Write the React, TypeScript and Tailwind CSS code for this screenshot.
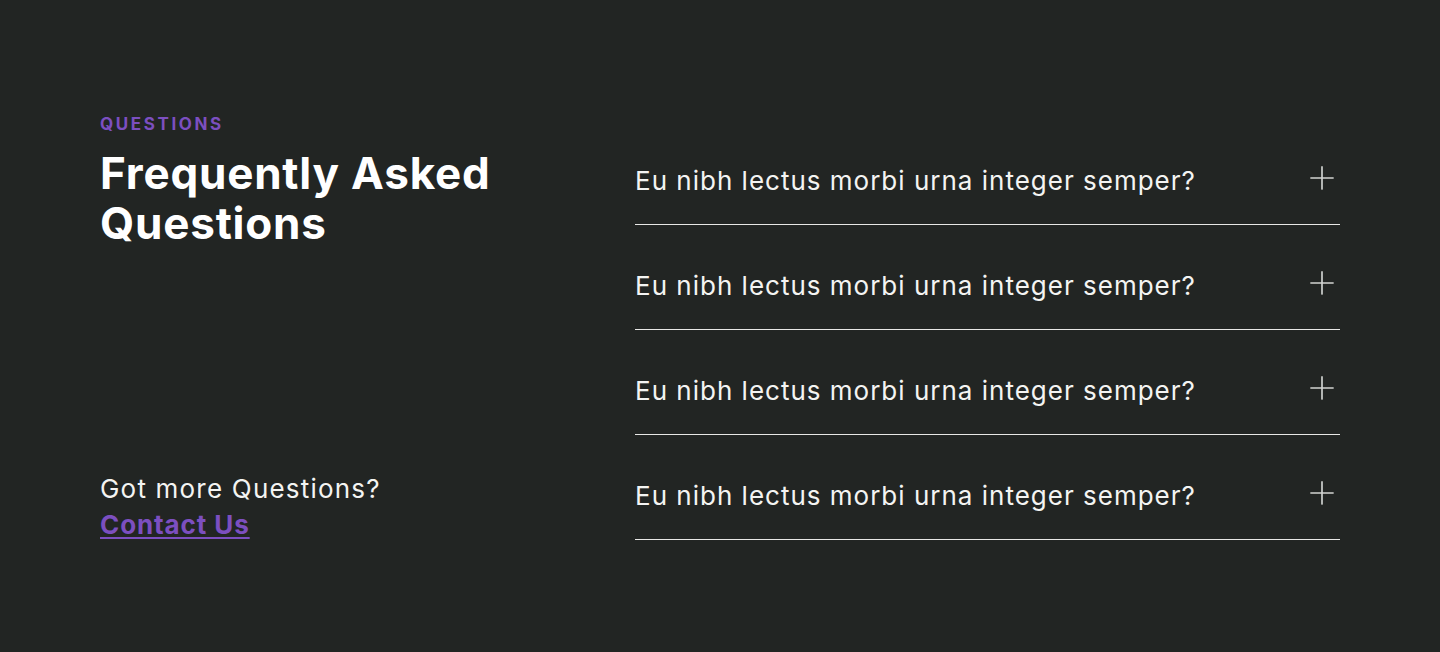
import { Plus } from "lucide-react";

const questions = [
  "Eu nibh lectus morbi urna integer semper?",
  "Eu nibh lectus morbi urna integer semper?",
  "Eu nibh lectus morbi urna integer semper?",
  "Eu nibh lectus morbi urna integer semper?",
];

function FaqRow({ q }: { q: string }) {
  return (
    <div className="flex items-center justify-between border-b border-[#e8e8e6] pt-[43px] pb-[25px]">
      <span className="text-[26px] leading-[36px] font-normal tracking-[1px] text-[#f4f4f2]">{q}</span>
      <Plus className="-my-[1px] -mr-[1px] -translate-y-[3px] h-[38px] w-[38px] text-[#d2d4d1]" strokeWidth={1.05} />
    </div>
  );
}

export default function App() {
  return (
    <div
      className="min-h-[652px] w-full bg-[#222523] pt-[105px]"
      style={{ fontFamily: "Inter, 'Noto Sans', sans-serif" }}
    >
      <div className="mx-[100px] flex justify-between">
        <div className="flex w-[420px] flex-col justify-between">
          <div>
            <p className="text-[17px] leading-[38px] font-bold tracking-[2.6px] text-[#7c4fc0]">QUESTIONS</p>
            <h2 className="mt-[5px] text-[44px] leading-[50px] font-bold tracking-[0.8px] text-white">
              Frequently Asked
              <br />
              Questions
            </h2>
          </div>
          <div className="-mb-[3px]">
            <p className="text-[26px] leading-[36px] tracking-[1.2px] text-[#f4f4f2]">Got more Questions?</p>
            <a href="#" className="text-[26px] leading-[36px] font-bold tracking-[0.9px] text-[#7c4fc0] underline decoration-2 underline-offset-[3px]">
              Contact Us
            </a>
          </div>
        </div>
        <div className="mt-[15px] w-[705px]">
          {questions.map((q, i) => (
            <FaqRow key={i} q={q} />
          ))}
        </div>
      </div>
    </div>
  );
}
